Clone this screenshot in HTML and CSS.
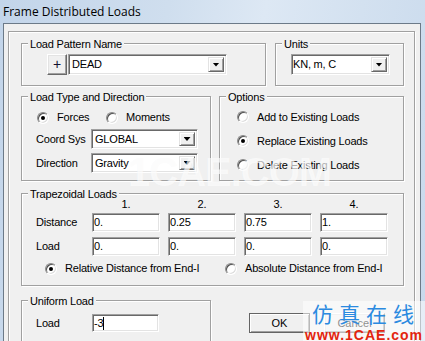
FILE: index.html
```html
<!DOCTYPE html>
<html>
<head>
<meta charset="utf-8">
<link rel="stylesheet" href="styles.css">
</head>
<body>
<div class="titlebar"><span class="title">Frame Distributed Loads</span></div>
<div class="window">
  <div class="panel">
    <div class="row row1">
      <div class="group g-pattern">
        <span class="gtitle">Load Pattern Name</span>
        <button class="btn plus">+</button>
        <div class="combo c-dead"><span class="ctext">DEAD</span><span class="drop"></span></div>
      </div>
      <div class="group g-units">
        <span class="gtitle">Units</span>
        <div class="combo c-units"><span class="ctext">KN, m, C</span><span class="drop"></span></div>
      </div>
    </div>
    <div class="row row2">
      <div class="group g-type">
        <span class="gtitle">Load Type and Direction</span>
        <div class="radios">
          <label class="radio r-forces"><span class="dot checked"></span>Forces</label>
          <label class="radio"><span class="dot"></span>Moments</label>
        </div>
        <div class="field f-coord"><span class="flabel">Coord Sys</span><div class="combo c-wide"><span class="ctext">GLOBAL</span><span class="drop"></span></div></div>
        <div class="field f-dir"><span class="flabel">Direction</span><div class="combo c-wide"><span class="ctext">Gravity</span><span class="drop"></span></div></div>
      </div>
      <div class="group g-options">
        <span class="gtitle">Options</span>
        <label class="radio orow"><span class="dot"></span>Add to Existing Loads</label>
        <label class="radio orow"><span class="dot checked"></span>Replace Existing Loads</label>
        <label class="radio orow"><span class="dot"></span>Delete Existing Loads</label>
      </div>
    </div>
    <div class="group g-trap">
      <span class="gtitle">Trapezoidal Loads</span>
      <div class="trow thead"><span class="tlabel"></span><span class="tnum">1.</span><span class="tnum">2.</span><span class="tnum">3.</span><span class="tnum">4.</span></div>
      <div class="trow tdist"><span class="tlabel">Distance</span><span class="tin">0.</span><span class="tin">0.25</span><span class="tin">0.75</span><span class="tin">1.</span></div>
      <div class="trow tload"><span class="tlabel">Load</span><span class="tin">0.</span><span class="tin">0.</span><span class="tin">0.</span><span class="tin">0.</span></div>
      <div class="trow tradio">
        <label class="radio r-rel"><span class="dot checked"></span>Relative Distance from End-I</label>
        <label class="radio"><span class="dot"></span>Absolute Distance from End-I</label>
      </div>
    </div>
    <div class="row row4">
      <div class="group g-uniform">
        <span class="gtitle">Uniform Load</span>
        <div class="trow"><span class="tlabel">Load</span><span class="tin u-in">-3<span class="caret"></span></span></div>
      </div>
      <div class="buttons">
        <button class="btn push ok">OK</button>
        <button class="btn push">Cancel</button>
      </div>
    </div>
  </div>
</div>
<div class="wm-center">1CAE.COM</div>
<div class="wm-corner">
  <div class="wm-cn">仿真在线</div>
  <div class="wm-url">www.1CAE.com</div>
</div>
</body>
</html>
```

FILE: styles.css
```css
* { box-sizing: border-box; }
html, body { margin: 0; width: 425px; height: 341px; overflow: hidden; }
body {
  position: relative;
  background: linear-gradient(100deg, #c3d5ea 0%, #cfdeee 35%, #dde8f4 55%, #d3e1f0 75%, #c8d9ec 100%);
  font: 11px/13px "Liberation Sans", Arial, sans-serif;
  letter-spacing: -0.2px;
  color: #000;
}
.titlebar {
  height: 23px;
  padding-left: 3px;
  display: flex;
  align-items: center;
  font: 12px/16px "Open Sans", "Noto Sans", sans-serif;
  letter-spacing: 0;
  color: #000;
}
.window {
  margin-left: 3px;
  width: 418px;
  height: 330px;
  background: #f0f0f0;
  border: 1px solid #6c7a88;
  border-bottom: 0;
  padding: 7px 5px 0 4px;
}
.panel {
  height: 330px;
  border: 1px solid #a0a0a0;
  box-shadow: inset 1px 1px 0 #fff, 1px 1px 0 #fff;
  padding: 11px 10px 0 12px;
}
.row { display: flex; }
.row1 { gap: 9px; height: 43px; }
.row2 { gap: 8px; height: 85px; margin-top: 10px; }
.row4 { margin-top: 14px; }

.group {
  position: relative;
  border: 1px solid #a0a0a0;
  box-shadow: inset 1px 1px 0 #fff, 1px 1px 0 #fff;
}
.gtitle {
  position: absolute;
  top: -6px;
  left: 6px;
  padding: 0 2px;
  background: #f0f0f0;
  line-height: 13px;
  white-space: nowrap;
}

/* Row 1 */
.g-pattern { width: 245px; display: flex; align-items: center; padding-left: 25px; }
.g-units { width: 129px; display: flex; align-items: center; padding-left: 15px; }

.btn {
  font: inherit;
  color: #000;
  padding: 0;
  margin: 0;
  background: #f0f0f0;
  border: 1px solid;
  border-color: #fff #696969 #696969 #fff;
  box-shadow: inset -1px -1px 0 #a0a0a0, inset 1px 1px 0 #e3e3e3;
  display: flex;
  align-items: center;
  justify-content: center;
}
.plus { width: 20px; height: 21px; margin-right: 1px; font-size: 14px; font-weight: normal; color: #101030; }

.combo {
  display: flex;
  height: 21px;
  background: #fff;
  border: 1px solid;
  border-color: #a0a0a0 #fff #fff #a0a0a0;
  box-shadow: inset 1px 1px 0 #696969, inset -1px -1px 0 #e3e3e3;
  padding: 2px 2px 2px 3px;
}
.c-dead { width: 159px; }
.c-units { width: 99px; padding-left: 1px; }
.c-wide { width: 107px; height: 20px; }
.ctext { flex: 1; display: flex; align-items: center; white-space: nowrap; }
.drop {
  width: 16px;
  flex: none;
  background: #f0f0f0;
  border: 1px solid;
  border-color: #e3e3e3 #696969 #696969 #e3e3e3;
  box-shadow: inset 1px 1px 0 #fff, inset -1px -1px 0 #a0a0a0;
  display: flex;
  align-items: center;
  justify-content: center;
}
.drop::after {
  content: "";
  width: 7px;
  height: 4px;
  background: #000;
  clip-path: polygon(0 0, 7px 0, 3.5px 4px);
}

/* Radios */
.radio { display: flex; align-items: center; white-space: nowrap; }
.dot {
  position: relative;
  flex: none;
  width: 12px;
  height: 12px;
  margin-right: 8px;
  border-radius: 50%;
  background: #fff;
  border: 1px solid;
  border-color: #8a8a8a #fff #fff #8a8a8a;
  box-shadow: inset 1px 1px 0 #505050, inset -1px -1px 0 #dcdcdc;
}
.dot.checked::after {
  content: "";
  position: absolute;
  left: 3px;
  top: 3px;
  width: 4px;
  height: 4px;
  border-radius: 50%;
  background: #000;
}

/* Row 2 */
.g-type { width: 190px; padding: 14px 0 0 14px; }
.radios { display: flex; height: 13px; align-items: center; margin-left: 1px; }
.r-forces { width: 69px; }
.field { display: flex; align-items: center; height: 20px; }
.f-coord { margin-top: 5px; }
.f-dir { margin-top: 4px; }
.flabel { width: 55px; }

.g-options { width: 185px; padding: 8px 0 0 17px; }
.orow { height: 24px; }

/* Trapezoidal */
.g-trap { height: 93px; margin-top: 12px; padding: 4px 0 0 14px; }
.trow { display: flex; gap: 8px; align-items: center; }
.tlabel { width: 48px; flex: none; }
.tnum { width: 68px; text-align: center; }
.thead { height: 13px; }
.tdist { margin-top: 2px; }
.tload { margin-top: 5px; }
.tin {
  width: 68px;
  height: 19px;
  flex: none;
  display: flex;
  align-items: center;
  background: #fff;
  border: 1px solid;
  border-color: #a0a0a0 #fff #fff #a0a0a0;
  box-shadow: inset 1px 1px 0 #696969, inset -1px -1px 0 #e3e3e3;
  padding-left: 1px;
}
.tradio { margin-top: 6px; height: 13px; gap: 0; padding-left: 9px; }
.r-rel { width: 180px; }

/* Row 4 */
.g-uniform { width: 190px; height: 60px; padding: 13px 0 0 14px; }
.u-in { width: 67px; height: 18px; }
.caret { display: inline-block; width: 1px; height: 13px; background: #000; margin-left: 0; }
.buttons { display: flex; gap: 14px; margin-left: 38px; margin-top: 13px; height: 20px; }
.push { width: 61px; height: 20px; }
.ok { border-color: #646464; box-shadow: inset 1px 1px 0 #fff, inset -1px -1px 0 #a0a0a0; }

/* Watermarks */
.wm-center {
  position: absolute;
  left: 128px;
  top: 150px;
  font: bold 40px/44px "Liberation Sans", Arial, sans-serif;
  letter-spacing: -1px;
  color: rgba(255, 255, 255, 0.7);
  text-shadow: 0 0 1px rgba(0, 0, 0, 0.03);
  pointer-events: none;
}
.wm-corner {
  position: absolute;
  left: 303px;
  top: 301px;
  width: 122px;
  height: 40px;
  background: rgba(255, 255, 255, 0.55);
}
.wm-cn {
  font: 21px/24px "Noto Sans CJK SC", sans-serif;
  letter-spacing: 6px;
  color: #2b8ae0;
  padding-left: 9px;
}
.wm-url {
  font: bold 14px/14px "Liberation Sans", Arial, sans-serif;
  letter-spacing: 1px;
  color: #e3240e;
  padding-left: 2px;
  margin-top: 3px;
}
```
